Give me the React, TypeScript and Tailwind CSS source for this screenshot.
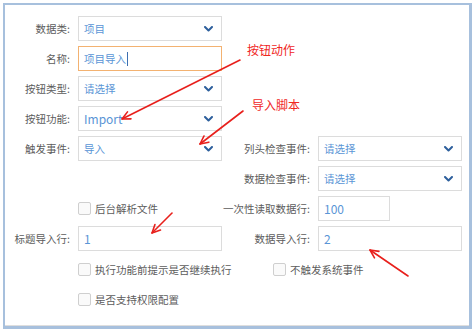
import React from "react"

const FONT = { fontFamily: '"Noto Sans CJK SC", "Noto Sans", sans-serif' }

function valueClass(v: string) {
  // latin values render a bit bigger than the CJK ones in the reference
  return /^[A-Za-z0-9]+$/.test(v) ? "text-[12px] text-[#5a95d6]" : "text-[10.5px] text-[#5a95d6]"
}

function Chevron() {
  return (
    <svg width="9" height="6" viewBox="0 0 9 6" className="shrink-0">
      <path d="M1 1 L4.5 4.5 L8 1" fill="none" stroke="#2d5f9c" strokeWidth="2" strokeLinecap="round" strokeLinejoin="round" />
    </svg>
  )
}

function Label(props: { text: string }) {
  return (
    <div className="flex items-center justify-end pr-[8px] whitespace-nowrap text-[10.5px] text-[#5c5c5c]">
      {props.text}
    </div>
  )
}

function Select(props: { value: string }) {
  return (
    <div className="flex items-center justify-between h-[25px] border border-[#dcdcdc] bg-white pl-[5px] pr-[8px]">
      <span className={valueClass(props.value)}>{props.value}</span>
      <Chevron />
    </div>
  )
}

function Input(props: { value: string; focused?: boolean; narrow?: boolean }) {
  return (
    <div
      className={
        "flex items-center h-[25px] border bg-white pl-[5px] " +
        (props.focused ? "border-[#f3b271] " : "border-[#dcdcdc] ") +
        (props.narrow ? "w-[72px]" : "")
      }
    >
      <span className={valueClass(props.value)}>{props.value}</span>
      {props.focused && <span className="ml-[1px] w-px h-[14px] bg-[#3d6fb0]" />}
    </div>
  )
}

function Check(props: { text: string }) {
  return (
    <div className="flex items-center gap-[4px] whitespace-nowrap">
      <span className="shrink-0 w-[13px] h-[13px] border border-[#cfcfcf] rounded-[2px] bg-[#fafafa]" />
      <span className="text-[10.5px] text-[#5c5c5c]">{props.text}</span>
    </div>
  )
}

function Arrow(props: { x1: number; y1: number; x2: number; y2: number }) {
  const { x1, y1, x2, y2 } = props
  const a = Math.atan2(y1 - y2, x1 - x2)
  const len = 9
  const p1 = [x2 + len * Math.cos(a + 0.45), y2 + len * Math.sin(a + 0.45)]
  const p2 = [x2 + len * Math.cos(a - 0.45), y2 + len * Math.sin(a - 0.45)]
  return (
    <g stroke="#e8201c" strokeWidth="1.6" fill="none" strokeLinecap="round">
      <line x1={x1} y1={y1} x2={x2} y2={y2} />
      <polyline points={`${p1[0]},${p1[1]} ${x2},${y2} ${p2[0]},${p2[1]}`} strokeLinejoin="round" />
    </g>
  )
}

export default function App() {
  return (
    <div className="relative w-[475px] h-[330px] bg-white" style={FONT}>
      <div className="ml-[3px] mt-[3px] w-[469px] h-[326px] border-2 border-r-[3px] border-b-[3px] border-[#a7c0dd]">
        <div className="h-full border-b border-[#dedede] pt-[11px]">
          <div className="grid grid-cols-[73px_144px_96px_144px] auto-rows-[25px] gap-y-[5px]">
            <Label text="数据类:" />
            <Select value="项目" />
            <div />
            <div />

            <Label text="名称:" />
            <Input value="项目导入" focused />
            <div />
            <div />

            <Label text="按钮类型:" />
            <Select value="请选择" />
            <div />
            <div />

            <Label text="按钮功能:" />
            <Select value="Import" />
            <div />
            <div />

            <Label text="触发事件:" />
            <Select value="导入" />
            <Label text="列头检查事件:" />
            <Select value="请选择" />

            <div />
            <div />
            <Label text="数据检查事件:" />
            <Select value="请选择" />

            <div />
            <Check text="后台解析文件" />
            <Label text="一次性读取数据行:" />
            <Input value="100" narrow />

            <Label text="标题导入行:" />
            <Input value="1" />
            <Label text="数据导入行:" />
            <Input value="2" />

            <div />
            <div className="pt-[6px]">
              <Check text="执行功能前提示是否继续执行" />
            </div>
            <div className="col-span-2 pt-[6px] pl-[51px]">
              <Check text="不触发系统事件" />
            </div>

            <div />
            <div className="pt-[6px]">
              <Check text="是否支持权限配置" />
            </div>
            <div />
            <div />
          </div>
        </div>
      </div>

      <div className="absolute left-[247px] top-[38px] text-[12px] text-[#f0271f]">按钮动作</div>
      <div className="absolute left-[252px] top-[93px] text-[12px] text-[#f0271f]">导入脚本</div>

      <svg className="absolute inset-0 pointer-events-none" width="475" height="330">
        <Arrow x1={240} y1={57} x2={122} y2={116} />
        <Arrow x1={243} y1={108} x2={200} y2={141} />
        <Arrow x1={172} y1={210} x2={152} y2={230} />
        <Arrow x1={408} y1={273} x2={370} y2={247} />
      </svg>
    </div>
  )
}
